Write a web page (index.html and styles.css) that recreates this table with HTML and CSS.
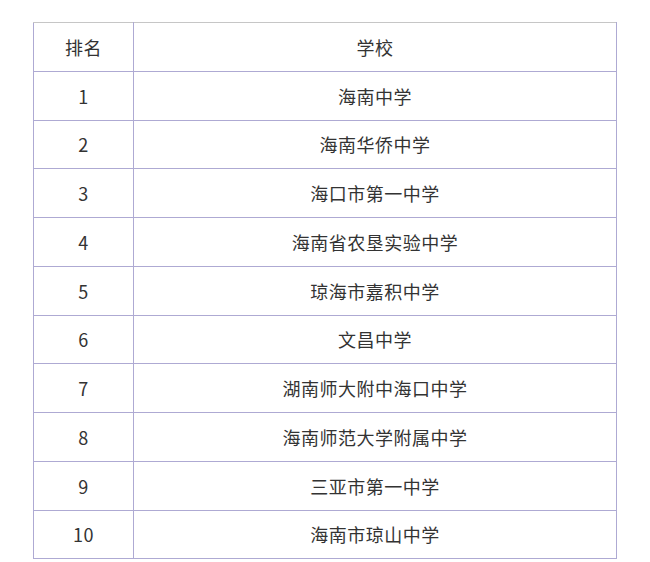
FILE: index.html
```html
<!DOCTYPE html>
<html lang="zh">
<head>
<meta charset="utf-8">
<link rel="stylesheet" href="styles.css">
</head>
<body>
<div class="wrap">
<table class="rank">
<thead>
<tr><th class="c1">排名</th><th>学校</th></tr>
</thead>
<tbody>
<tr><td class="c1">1</td><td>海南中学</td></tr>
<tr><td class="c1">2</td><td>海南华侨中学</td></tr>
<tr><td class="c1">3</td><td>海口市第一中学</td></tr>
<tr><td class="c1">4</td><td>海南省农垦实验中学</td></tr>
<tr><td class="c1">5</td><td>琼海市嘉积中学</td></tr>
<tr><td class="c1">6</td><td>文昌中学</td></tr>
<tr><td class="c1">7</td><td>湖南师大附中海口中学</td></tr>
<tr><td class="c1">8</td><td>海南师范大学附属中学</td></tr>
<tr><td class="c1">9</td><td>三亚市第一中学</td></tr>
<tr><td class="c1">10</td><td>海南市琼山中学</td></tr>
</tbody>
</table>
</div>
</body>
</html>
```
FILE: styles.css
```css
html, body {
  margin: 0;
  padding: 0;
  background: #ffffff;
}
.wrap {
  padding: 22px 0 0 33px;
}
.rank {
  border-collapse: collapse;
  width: 584px;
  font-family: "Noto Sans CJK SC", "Noto Sans", sans-serif;
  font-size: 18px;
  letter-spacing: 0.5px;
  line-height: 1;
  color: #333333;
}
.rank th, .rank td {
  border: 1.5px solid #aeaad3;
  height: 47.75px;
  padding: 0;
  text-align: center;
  vertical-align: middle;
  font-weight: normal;
}
.rank thead th {
  border-top-color: #c6c6c6;
}
.rank .c1 {
  width: 99px;
}
```
